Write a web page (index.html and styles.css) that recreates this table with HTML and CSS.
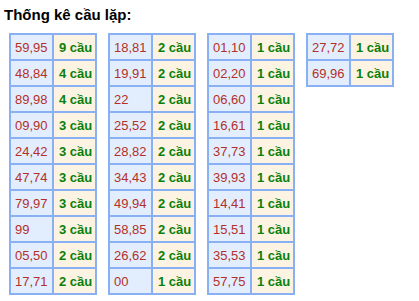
FILE: index.html
```html
<!DOCTYPE html>
<html>
<head>
<meta charset="utf-8">
<link rel="stylesheet" href="styles.css">
</head>
<body>
<div class="page">
  <div class="title">Thống kê cầu lặp:</div>
  <div class="tables">
    <table class="stat">
      <tr><td class="num">59,95</td><td class="cnt">9 cầu</td></tr>
      <tr><td class="num">48,84</td><td class="cnt">4 cầu</td></tr>
      <tr><td class="num">89,98</td><td class="cnt">4 cầu</td></tr>
      <tr><td class="num">09,90</td><td class="cnt">3 cầu</td></tr>
      <tr><td class="num">24,42</td><td class="cnt">3 cầu</td></tr>
      <tr><td class="num">47,74</td><td class="cnt">3 cầu</td></tr>
      <tr><td class="num">79,97</td><td class="cnt">3 cầu</td></tr>
      <tr><td class="num">99</td><td class="cnt">3 cầu</td></tr>
      <tr><td class="num">05,50</td><td class="cnt">2 cầu</td></tr>
      <tr><td class="num">17,71</td><td class="cnt">2 cầu</td></tr>
    </table>
    <table class="stat">
      <tr><td class="num">18,81</td><td class="cnt">2 cầu</td></tr>
      <tr><td class="num">19,91</td><td class="cnt">2 cầu</td></tr>
      <tr><td class="num">22</td><td class="cnt">2 cầu</td></tr>
      <tr><td class="num">25,52</td><td class="cnt">2 cầu</td></tr>
      <tr><td class="num">28,82</td><td class="cnt">2 cầu</td></tr>
      <tr><td class="num">34,43</td><td class="cnt">2 cầu</td></tr>
      <tr><td class="num">49,94</td><td class="cnt">2 cầu</td></tr>
      <tr><td class="num">58,85</td><td class="cnt">2 cầu</td></tr>
      <tr><td class="num">26,62</td><td class="cnt">2 cầu</td></tr>
      <tr><td class="num">00</td><td class="cnt">1 cầu</td></tr>
    </table>
    <table class="stat">
      <tr><td class="num">01,10</td><td class="cnt">1 cầu</td></tr>
      <tr><td class="num">02,20</td><td class="cnt">1 cầu</td></tr>
      <tr><td class="num">06,60</td><td class="cnt">1 cầu</td></tr>
      <tr><td class="num">16,61</td><td class="cnt">1 cầu</td></tr>
      <tr><td class="num">37,73</td><td class="cnt">1 cầu</td></tr>
      <tr><td class="num">39,93</td><td class="cnt">1 cầu</td></tr>
      <tr><td class="num">14,41</td><td class="cnt">1 cầu</td></tr>
      <tr><td class="num">15,51</td><td class="cnt">1 cầu</td></tr>
      <tr><td class="num">35,53</td><td class="cnt">1 cầu</td></tr>
      <tr><td class="num">57,75</td><td class="cnt">1 cầu</td></tr>
    </table>
    <table class="stat">
      <tr><td class="num">27,72</td><td class="cnt">1 cầu</td></tr>
      <tr><td class="num">69,96</td><td class="cnt">1 cầu</td></tr>
    </table>
  </div>
</div>
</body>
</html>
```
FILE: styles.css
```css
html, body {
  margin: 0;
  padding: 0;
  background: #ffffff;
}
.page {
  padding: 6px 0 0 4px;
  font-family: "Liberation Sans", Arial, sans-serif;
}
.title {
  font-size: 15px;
  font-weight: bold;
  line-height: 18px;
  color: #000;
}
.tables {
  display: flex;
  align-items: flex-start;
  gap: 11px;
  margin: 9px 0 0 5px;
}
.stat {
  border-collapse: separate;
  border-spacing: 0;
  border: 1px solid #8ab0f4;
}
.stat td {
  border: 1px solid #8ab0f4;
  height: 26px;
  box-sizing: border-box;
  width: 43px;
  padding: 0 1px 0 4px;
  font-size: 13px;
  vertical-align: middle;
  white-space: nowrap;
}
.stat .num {
  background: #e2eefd;
  color: #b3302a;
}
.stat .cnt {
  background: #fdf3e2;
  color: #0a800a;
  font-weight: bold;
  padding-left: 5px;
}
```
